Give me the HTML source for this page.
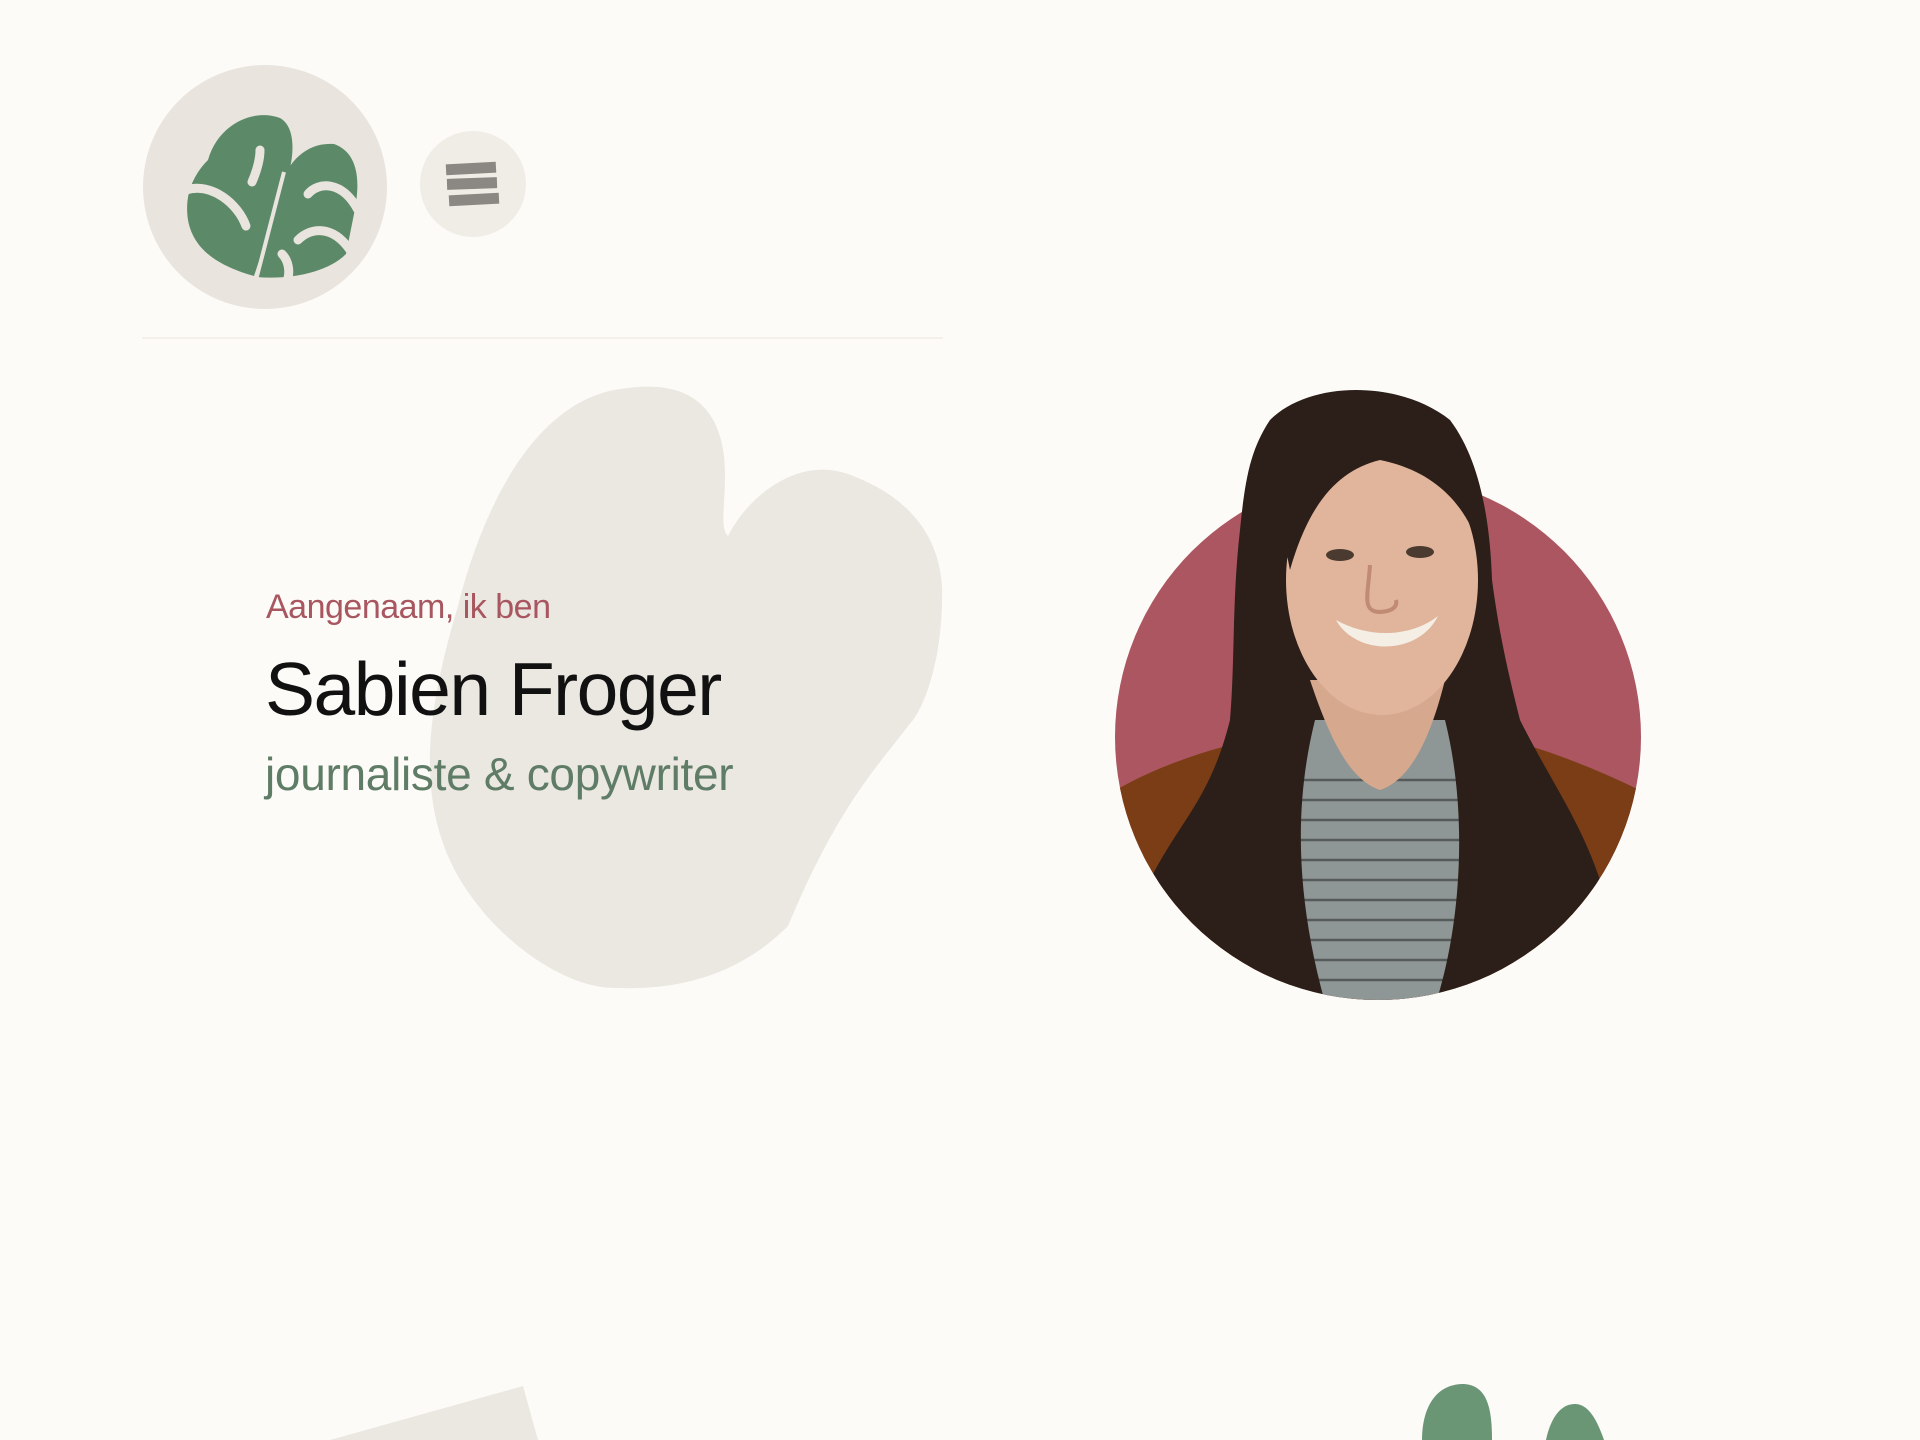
<!DOCTYPE html>
<html><head><meta charset="utf-8"><style>
html,body{margin:0;padding:0;background:#fdfbf7;width:1920px;height:1440px;overflow:hidden;font-family:"Liberation Sans",sans-serif}
.abs{position:absolute;white-space:nowrap}
</style></head><body>
<!-- logo -->
<svg class="abs" style="left:142px;top:64px" width="246" height="246" viewBox="0 0 246 246">
<circle cx="123" cy="123" r="122" fill="#e9e5de"/>
<g fill="#5c8a69">
<path d="M66 96 C76 60 112 44 138 54 C156 64 152 100 142 122 L112 212 C84 204 52 190 46 156 C42 130 52 110 66 96Z"/>
<path d="M138 124 C146 96 166 78 192 80 C214 88 220 112 212 150 L204 190 C186 208 150 216 114 213 Z"/>
</g>
<g fill="none" stroke="#e9e5de" stroke-width="9" stroke-linecap="round">
<path d="M44 126 C70 118 96 140 104 162"/>
<path d="M110 118 C116 104 118 94 118 86"/>
<path d="M216 146 C200 116 176 118 166 130"/>
<path d="M208 186 C190 160 168 164 156 176"/>
<path d="M140 190 C146 196 148 206 146 214"/>
</g>
<path d="M142 108 L114 216" stroke="#e9e5de" stroke-width="4"/>
</svg>
<!-- menu -->
<div class="abs" style="left:420px;top:131px;width:106px;height:106px;border-radius:50%;background:#f0ede6"></div>
<div class="abs" style="left:446px;top:163px;width:50px;height:11px;background:#8b8783;transform:rotate(-3deg)"></div>
<div class="abs" style="left:447px;top:178px;width:50px;height:11px;background:#8b8783;transform:rotate(-2deg)"></div>
<div class="abs" style="left:449px;top:194px;width:50px;height:11px;background:#8b8783;transform:rotate(-3deg)"></div>
<!-- divider -->
<div class="abs" style="left:142px;top:337px;width:801px;height:2px;background:#f3f0ea"></div>
<!-- blob -->
<svg class="abs" style="left:418px;top:386px" width="530" height="604" viewBox="0 0 530 604">
<path d="M210 2 C270 -6 300 20 306 70 C310 110 300 140 310 150 C330 110 380 70 430 88 C480 106 520 140 524 200 C526 260 510 320 490 340 C460 380 420 420 370 540 C320 590 260 604 200 602 C140 604 60 540 30 470 C0 400 10 320 40 220 C60 140 110 10 210 2Z" fill="#ebe8e2"/>
</svg>
<!-- text -->
<div class="abs" style="left:266px;top:588px;font-size:34px;color:#a8565f;letter-spacing:-0.5px">Aangenaam, ik ben</div>
<div class="abs" style="left:265px;top:646px;font-size:75px;color:#111;letter-spacing:-1.5px">Sabien Froger</div>
<div class="abs" style="left:265px;top:747px;font-size:46px;color:#5f7c67;letter-spacing:-0.3px">journaliste &amp; copywriter</div>
<!-- photo -->
<svg class="abs" style="left:1100px;top:380px" width="560" height="640" viewBox="0 0 560 640">
<defs><clipPath id="c"><rect x="0" y="0" width="560" height="357"/><circle cx="278" cy="357" r="263"/></clipPath></defs>
<circle cx="278" cy="357" r="263" fill="#ab5660"/>
<g clip-path="url(#c)">
<path d="M0 420 C60 380 140 360 200 350 L360 350 C430 360 500 390 560 420 V640 H0Z" fill="#7a3d16"/>
<path d="M175 340 L370 340 L390 640 L165 640Z" fill="#8e9796"/>
<g stroke="#333" stroke-width="2.5" opacity="0.6">
<line x1="170" y1="400" x2="370" y2="400"/><line x1="170" y1="420" x2="370" y2="420"/><line x1="170" y1="440" x2="370" y2="440"/><line x1="170" y1="460" x2="370" y2="460"/><line x1="170" y1="480" x2="370" y2="480"/><line x1="170" y1="500" x2="370" y2="500"/><line x1="170" y1="520" x2="370" y2="520"/><line x1="170" y1="540" x2="370" y2="540"/><line x1="170" y1="560" x2="370" y2="560"/><line x1="170" y1="580" x2="370" y2="580"/><line x1="170" y1="600" x2="370" y2="600"/>
</g>
<path d="M170 40 C210 0 300 0 350 40 C380 80 390 140 392 200 C400 260 410 300 420 340 C450 400 480 440 500 500 C510 560 450 600 380 640 L330 640 C360 560 370 440 345 340 L215 340 C190 440 200 540 230 640 L120 640 C60 600 30 560 50 500 C80 440 110 420 130 340 C135 280 132 220 140 150 C145 100 150 70 170 40Z" fill="#2c1e18"/>
<path d="M210 300 C230 360 250 400 280 410 C310 400 330 360 345 300 Z" fill="#d6a88e"/>
<ellipse cx="282" cy="200" rx="96" ry="135" fill="#e0b59c"/>
<path d="M180 140 C200 60 260 30 310 50 C350 70 370 110 380 170 C365 120 330 90 280 80 C240 90 210 120 190 190Z" fill="#2c1e18"/>
<path d="M236 240 C268 258 310 258 338 236 C318 276 256 276 236 240Z" fill="#f4eee4"/>
<ellipse cx="240" cy="175" rx="14" ry="6" fill="#4b3a30"/><ellipse cx="320" cy="172" rx="14" ry="6" fill="#4b3a30"/>
<path d="M270 185 C268 215 262 230 278 232 C290 232 298 228 296 220" fill="none" stroke="#c08b72" stroke-width="4"/>
</g>
</svg>
<!-- bottom shapes -->
<svg class="abs" style="left:320px;top:1380px" width="230" height="60"><path d="M10 60 L203 6 L218 60Z" fill="#ebe8e2"/></svg>
<svg class="abs" style="left:1410px;top:1375px" width="240" height="65">
<path d="M12 65 C12 35 24 10 52 9 C78 9 82 35 82 65Z" fill="#6a9676"/>
<path d="M136 65 C140 45 150 28 166 29 C180 30 188 48 194 65Z" fill="#6a9676"/>
</svg>
</body></html>
